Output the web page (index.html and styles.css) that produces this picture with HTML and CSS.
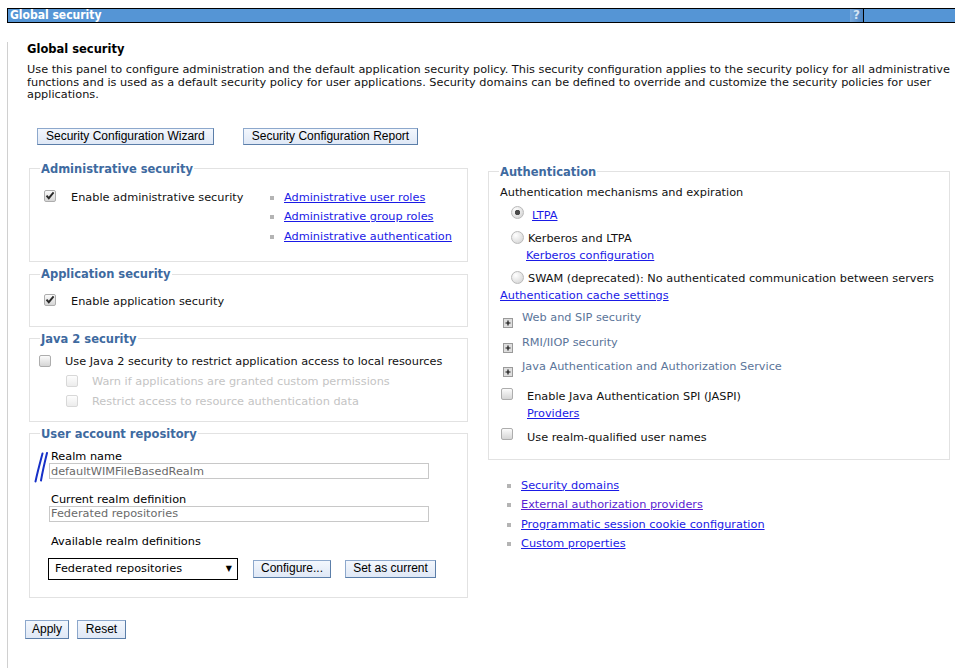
FILE: index.html
```html
<!DOCTYPE html>
<html>

<head>
    <title>Global security</title>
    <link rel="stylesheet" href="styles.css">
</head>

<body>
    <div class="portlet">
        <div class="title-bar">
            <span class="title">Global security</span>
            <span class="help">?</span>
        </div>

        <div class="content">
            <h1 class="page-title">Global security</h1>
            <p class="description">
                Use this panel to configure administration and the default application security policy. This security configuration applies to the security policy for all administrative<br>
                functions and is used as a default security policy for user applications. Security domains can be defined to override and customize the security policies for user<br>
                applications.
            </p>

            <div class="top-buttons">
                <button class="btn btn-wide">Security Configuration Wizard</button>
                <button class="btn btn-wide">Security Configuration Report</button>
            </div>

            <div class="columns">
                <!-- left column -->
                <div class="col-left">
                    <fieldset class="box admin-box">
                        <legend>Administrative security</legend>
                        <div class="box-body admin-row">
                            <div class="check-row admin-check">
                                <span class="check"><svg width="10" height="10" viewBox="0 0 10 10"><path d="M1.5 4.6 L3.8 7.2 L8.6 1.4" fill="none" stroke="#2a2a2a" stroke-width="1.9"/></svg></span>
                                <span>Enable administrative security</span>
                            </div>
                            <ul class="links">
                                <li><a href="#">Administrative user roles</a></li>
                                <li><a href="#">Administrative group roles</a></li>
                                <li><a href="#">Administrative authentication</a></li>
                            </ul>
                        </div>
                    </fieldset>

                    <fieldset class="box app-box">
                        <legend>Application security</legend>
                        <div class="box-body">
                            <div class="check-row">
                                <span class="check"><svg width="10" height="10" viewBox="0 0 10 10"><path d="M1.5 4.6 L3.8 7.2 L8.6 1.4" fill="none" stroke="#2a2a2a" stroke-width="1.9"/></svg></span>
                                <span>Enable application security</span>
                            </div>
                        </div>
                    </fieldset>

                    <fieldset class="box java-box">
                        <legend>Java 2 security</legend>
                        <div class="box-body">
                            <div class="check-row java-row">
                                <span class="check"></span>
                                <span>Use Java 2 security to restrict application access to local resources</span>
                            </div>
                            <div class="check-row java-row sub-row disabled">
                                <span class="check"></span>
                                <span>Warn if applications are granted custom permissions</span>
                            </div>
                            <div class="check-row java-row sub-row disabled">
                                <span class="check"></span>
                                <span>Restrict access to resource authentication data</span>
                            </div>
                        </div>
                    </fieldset>

                    <fieldset class="box repo-box">
                        <legend>User account repository</legend>
                        <div class="box-body">
                            <div class="field">
                                <svg class="scribble" width="16" height="32" viewBox="0 0 16 32"><path d="M9.5 1.5 C7.5 9 4.5 20 2.5 29.5 M14 1 C12 9 9.5 20 8 28.5" fill="none" stroke="#1630c8" stroke-width="2" stroke-linecap="round"/></svg>
                                <div class="field-label">Realm name</div>
                                <input class="field-input" type="text" value="defaultWIMFileBasedRealm" readonly>
                            </div>
                            <div class="field">
                                <div class="field-label">Current realm definition</div>
                                <input class="field-input" type="text" value="Federated repositories" readonly>
                            </div>
                            <div class="field">
                                <div class="field-label">Available realm definitions</div>
                            </div>
                            <div class="realm-actions">
                                <div class="realm-select">
                                    <span>Federated repositories</span>
                                    <span class="arrow">&#9660;</span>
                                </div>
                                <button class="btn btn-configure">Configure...</button>
                                <button class="btn btn-current">Set as current</button>
                            </div>
                        </div>
                    </fieldset>
                </div>

                <!-- right column -->
                <div class="col-right">
                    <fieldset class="box auth-box">
                        <legend>Authentication</legend>
                        <div class="box-body">
                            <div class="auth-intro">Authentication mechanisms and expiration</div>
                            <div class="radio-row ltpa-row">
                                <span class="radio on"></span>
                                <a href="#">LTPA</a>
                            </div>
                            <div class="radio-row kerberos-row">
                                <span class="radio"></span>
                                <span>Kerberos and LTPA</span>
                            </div>
                            <div class="sub-link"><a href="#">Kerberos configuration</a></div>
                            <div class="radio-row swam-row">
                                <span class="radio"></span>
                                <span>SWAM (deprecated): No authenticated communication between servers</span>
                            </div>
                            <div class="cache-link"><a href="#">Authentication cache settings</a></div>

                            <div class="expand-row web-row">
                                <svg class="expand" width="10" height="10" viewBox="0 0 10 10"><rect x="0.5" y="0.5" width="9" height="9" fill="#dedede" stroke="#9a9a9a"/><path d="M2.5 5h5M5 2.5v5" stroke="#111" stroke-width="1.2"/></svg>
                                <span>Web and SIP security</span>
                            </div>
                            <div class="expand-row rmi-row">
                                <svg class="expand" width="10" height="10" viewBox="0 0 10 10"><rect x="0.5" y="0.5" width="9" height="9" fill="#dedede" stroke="#9a9a9a"/><path d="M2.5 5h5M5 2.5v5" stroke="#111" stroke-width="1.2"/></svg>
                                <span>RMI/IIOP security</span>
                            </div>
                            <div class="expand-row jaas-row">
                                <svg class="expand" width="10" height="10" viewBox="0 0 10 10"><rect x="0.5" y="0.5" width="9" height="9" fill="#dedede" stroke="#9a9a9a"/><path d="M2.5 5h5M5 2.5v5" stroke="#111" stroke-width="1.2"/></svg>
                                <span>Java Authentication and Authorization Service</span>
                            </div>

                            <div class="check-row auth-check jaspi-row">
                                <span class="check"></span>
                                <span>Enable Java Authentication SPI (JASPI)</span>
                            </div>
                            <div class="providers-link"><a href="#">Providers</a></div>
                            <div class="check-row auth-check realm-row">
                                <span class="check"></span>
                                <span>Use realm-qualified user names</span>
                            </div>
                        </div>
                    </fieldset>

                    <ul class="links more-links">
                        <li><a href="#">Security domains</a></li>
                        <li><a href="#" class="visited">External authorization providers</a></li>
                        <li><a href="#">Programmatic session cookie configuration</a></li>
                        <li><a href="#">Custom properties</a></li>
                    </ul>
                </div>
            </div>

            <div class="form-buttons">
                <button class="btn btn-apply">Apply</button>
                <button class="btn btn-reset">Reset</button>
            </div>
        </div>
    </div>
</body>
</html>
```

FILE: styles.css
```css
body {
    margin: 0;
    font-family: "DejaVu Sans", Verdana, sans-serif;
    font-size: 11.3px;
    color: #111;
    background-color: #fff;
    overflow: hidden;
}

a {
    color: #1a1ae6;
    text-decoration: underline;
}

a.visited {
    color: #5a1ed2;
}

.portlet {
    margin: 8px 0 0 7px;
}

/* title bar */
.title-bar {
    display: flex;
    height: 13px;
    border: 1px solid #000;
    border-right: none;
    background-color: #5595d5;
}

.title {
    width: 840px;
    padding-left: 2px;
    color: #fff;
    font-family: "DejaVu Sans Condensed", "Liberation Sans", sans-serif;
    font-weight: bold;
    font-size: 12px;
    line-height: 13px;
}

.help {
    width: 13px;
    border-right: 1px solid #000;
    background: linear-gradient(to right, #7aaadd, #4a82c0);
    color: #d3e3f4;
    font-family: "DejaVu Sans", sans-serif;
    font-weight: bold;
    font-size: 12px;
    line-height: 13px;
    text-align: center;
}

.content {
    min-height: 645px;
    border-left: 1px solid #d0d0d0;
    padding-left: 19px;
}

.page-title {
    margin: 19px 0 0;
    font-size: 11.5px;
    line-height: 14px;
    color: #000;
}

.description {
    margin: 8px 0 0;
    line-height: 12.5px;
    white-space: nowrap;
}

/* buttons */
.btn {
    box-sizing: border-box;
    height: 17px;
    padding: 0;
    border: 1px solid;
    border-color: #8da8cc #5b7ea9 #5b7ea9 #8da8cc;
    background: linear-gradient(#f3f7fd, #dfe8f6);
    font-family: "Liberation Sans", Arial, sans-serif;
    font-size: 12px;
    line-height: 15px;
    color: #000;
}

.btn-wide {
    padding: 0 8px;
}

.top-buttons {
    display: flex;
    gap: 29px;
    margin: 26px 0 0 10px;
}

/* columns */
.columns {
    display: flex;
    gap: 20px;
    margin: 17px 0 0 2px;
}

.col-left {
    width: 439px;
}

.col-right {
    width: 462px;
}

.box {
    margin: 0;
    padding: 0;
    border: 1px solid #e2e2e2;
    min-width: 0;
}

.box + .box {
    margin-top: 5px;
}

.box legend {
    margin-left: 10px;
    padding: 0 1px;
    color: #3e6aa0;
    font-weight: bold;
    font-size: 11.5px;
    line-height: 14px;
}

/* checkboxes */
.check-row {
    display: flex;
    align-items: flex-start;
    line-height: 19.5px;
}

.check {
    flex-shrink: 0;
    width: 10px;
    height: 10px;
    margin-top: 2px;
    margin-right: 15px;
    border: 1px solid #adadad;
    border-radius: 2px;
    background: linear-gradient(#fbfbfb, #d5d5d5);
}

.check svg {
    display: block;
}

.disabled {
    color: #c4c4c4;
}

.disabled .check {
    border-color: #d8d8d8;
    background: linear-gradient(#fdfdfd, #ececec);
}

/* link lists */
.links {
    margin: 0;
    padding: 0;
    list-style: none;
}

.links li {
    line-height: 19.5px;
}

.links li::before {
    content: "";
    display: inline-block;
    width: 4px;
    height: 4px;
    margin-right: 10px;
    background-color: #b4b4b4;
    vertical-align: middle;
}

/* administrative security */
.admin-box {
    padding: 12px 0 15px;
}

.admin-row {
    display: flex;
    padding-left: 14px;
}

.admin-check {
    width: 226px;
    flex-shrink: 0;
}

.app-box {
    padding: 11px 0 14px;
}

.app-box .box-body {
    padding-left: 14px;
}

/* java 2 */
.java-box {
    padding: 6px 0 9px;
}

.java-box .box-body {
    padding-left: 9px;
}

.java-row {
    line-height: 20px;
}

.java-row .check {
    margin-top: 3px;
    margin-right: 14px;
}

.sub-row {
    margin-left: 27px;
}

/* user account repository */
.repo-box {
    padding: 9.5px 0 17px;
}

.repo-box .box-body {
    padding-left: 19px;
}

.field {
    position: relative;
}

.field + .field {
    margin-top: 13.5px;
}

.field-label {
    padding-left: 2px;
    line-height: 13px;
    color: #000;
}

.field-input {
    display: block;
    box-sizing: border-box;
    width: 380px;
    height: 16px;
    margin: 0;
    padding: 0 1px;
    border: 1px solid #c8c8c8;
    font-family: "DejaVu Sans", Verdana, sans-serif;
    font-size: 11.3px;
    color: #6a6a6a;
    outline: none;
}

.scribble {
    position: absolute;
    left: -16px;
    top: 2px;
}

.realm-actions {
    display: flex;
    align-items: center;
    margin-top: 9.5px;
}

.realm-select {
    display: flex;
    justify-content: space-between;
    align-items: center;
    box-sizing: border-box;
    width: 190px;
    height: 22px;
    margin-left: -1px;
    padding: 0 5px 0 6px;
    border: 1px solid #000;
    color: #000;
}

.arrow {
    font-size: 8px;
}

.btn-configure {
    width: 78px;
    height: 18px;
    margin-left: 15px;
}

.btn-current {
    width: 91px;
    height: 18px;
    margin-left: 14px;
}

/* authentication */
.auth-box {
    margin-top: 3px;
    padding: 7px 0 11px;
}

.auth-box .box-body {
    padding-left: 11px;
}

.auth-intro {
    line-height: 14px;
}

.radio-row {
    display: flex;
    align-items: flex-start;
    margin-left: 11px;
    line-height: 20px;
}

.radio {
    flex-shrink: 0;
    width: 11px;
    height: 11px;
    margin-right: 4px;
    border: 1px solid #bababa;
    border-radius: 50%;
    background: radial-gradient(circle at 35% 30%, #ffffff, #d0d0d0);
}

.radio.on {
    margin-right: 8px;
    background: radial-gradient(circle, #4a4a4a 0 2.4px, transparent 3px),
        radial-gradient(circle at 35% 30%, #ffffff, #cdcdcd);
}

.ltpa-row {
    margin-top: 6px;
}

.kerberos-row {
    margin-top: 3px;
}

.kerberos-row .radio,
.swam-row .radio {
    margin-top: 2px;
}

.sub-link {
    margin-left: 26px;
    line-height: 14px;
}

.swam-row {
    margin-top: 6px;
}

.cache-link {
    line-height: 13px;
}

.expand-row {
    display: flex;
    align-items: flex-start;
    line-height: 14px;
    color: #5a7499;
}

.expand {
    flex-shrink: 0;
    margin: 7px 9px 0 3px;
}

.web-row {
    margin-top: 9px;
}

.rmi-row {
    margin-top: 8px;
}

.jaas-row {
    margin-top: 7px;
}

.auth-check {
    line-height: 20px;
}

.auth-check .check {
    margin-left: 1px;
    margin-right: 14px;
}

.jaspi-row {
    margin-top: 10px;
}

.jaspi-row .check {
    margin-top: 1px;
}

.providers-link {
    margin-left: 27px;
    line-height: 14px;
}

.realm-row {
    margin-top: 7px;
}

.realm-row .check {
    margin-top: 0;
}

.more-links {
    margin-top: 16px;
    padding-left: 19px;
}

/* apply / reset */
.form-buttons {
    display: flex;
    gap: 8px;
    margin: 22px 0 0 -2px;
}

.btn-apply {
    width: 44px;
    height: 19px;
}

.btn-reset {
    width: 49px;
    height: 19px;
}
```
